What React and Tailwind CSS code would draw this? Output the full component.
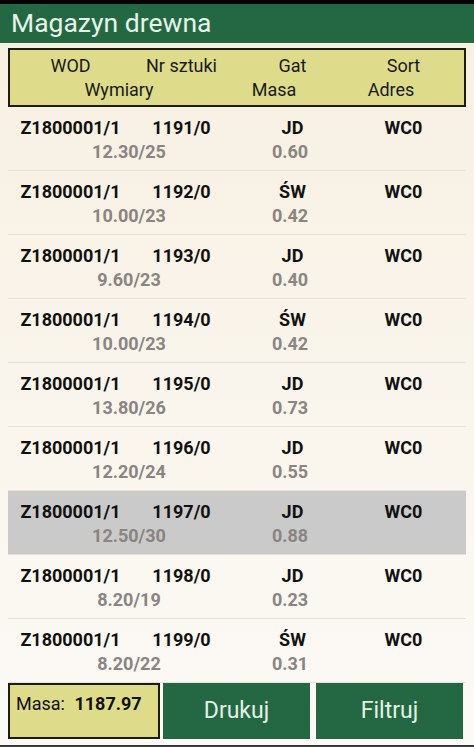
const rows = [
  { wod: "Z1800001/1", nr: "1191/0", gat: "JD", sort: "WC0", wym: "12.30/25", masa: "0.60" },
  { wod: "Z1800001/1", nr: "1192/0", gat: "ŚW", sort: "WC0", wym: "10.00/23", masa: "0.42" },
  { wod: "Z1800001/1", nr: "1193/0", gat: "JD", sort: "WC0", wym: "9.60/23", masa: "0.40" },
  { wod: "Z1800001/1", nr: "1194/0", gat: "ŚW", sort: "WC0", wym: "10.00/23", masa: "0.42" },
  { wod: "Z1800001/1", nr: "1195/0", gat: "JD", sort: "WC0", wym: "13.80/26", masa: "0.73" },
  { wod: "Z1800001/1", nr: "1196/0", gat: "JD", sort: "WC0", wym: "12.20/24", masa: "0.55" },
  { wod: "Z1800001/1", nr: "1197/0", gat: "JD", sort: "WC0", wym: "12.50/30", masa: "0.88", selected: true },
  { wod: "Z1800001/1", nr: "1198/0", gat: "JD", sort: "WC0", wym: "8.20/19", masa: "0.23" },
  { wod: "Z1800001/1", nr: "1199/0", gat: "ŚW", sort: "WC0", wym: "8.20/22", masa: "0.31" },
]

function Row({ r }) {
  return (
    <div
      className={`h-[64px] mx-[8px] pt-[9px] border-b border-[#e8e2d6] ${
        r.selected ? "bg-[#cacaca]" : ""
      }`}
    >
      <div className="flex pl-[7px] text-[18px] leading-[24px] font-bold text-[#111]">
        <div className="w-[111px] text-center">{r.wod}</div>
        <div className="w-[111px] text-center">{r.nr}</div>
        <div className="w-[111px] text-center">{r.gat}</div>
        <div className="w-[111px] text-center">{r.sort}</div>
      </div>
      <div className="flex pl-[7px] text-[18px] leading-[24px] font-bold text-[#8a8482]">
        <div className="w-[228px] text-center">{r.wym}</div>
        <div className="w-[94px] text-center">{r.masa}</div>
      </div>
    </div>
  )
}

export default function App() {
  return (
    <div
      className="w-[474px] h-[747px] overflow-hidden flex flex-col bg-gradient-to-b from-[#f7efe1] to-[#fcfaf6] text-[#111]"
      style={{ fontFamily: "Roboto, 'Noto Sans', sans-serif" }}
    >
      {/* status bar strip */}
      <div className="h-[4px] bg-black" />

      {/* title bar */}
      <div className="h-[39px] bg-[#246843] flex items-center pl-[11px]">
        <h1 className="text-[26.5px] leading-none text-[#e6f3e8]">Magazyn drewna</h1>
      </div>

      {/* column header */}
      <div className="mt-[5px] mx-[8px] h-[59px] border-2 border-[#1c1c14] bg-[#dedc8a] pt-[4px] text-[18px] leading-[24px] text-[#1a1a1a]">
        <div className="flex pl-[5px]">
          <div className="w-[111px] text-center">WOD</div>
          <div className="w-[111px] text-center">Nr sztuki</div>
          <div className="w-[111px] text-center">Gat</div>
          <div className="w-[111px] text-center">Sort</div>
        </div>
        <div className="flex pl-[5px]">
          <div className="w-[208px] text-center">Wymiary</div>
          <div className="w-[102px] text-center">Masa</div>
          <div className="w-[132px] text-center">Adres</div>
        </div>
      </div>

      {/* list */}
      <div className="flex-1 overflow-hidden">
        {rows.map((r) => (
          <Row key={r.nr} r={r} />
        ))}
      </div>

      {/* footer */}
      <div className="flex h-[56px] pl-[8px] mb-[6px]">
        <div className="w-[152px] border-2 border-[#1c1c14] bg-[#dedc8a] pl-[6px] pt-[7px] text-[18px] leading-[24px]">
          Masa: <span className="font-bold ml-[5px]">1187.97</span>
        </div>
        <button className="ml-[3px] w-[147px] bg-[#246843] text-[23px] text-[#e3f2e6]">Drukuj</button>
        <button className="ml-[6px] w-[147px] bg-[#246843] text-[23px] text-[#e3f2e6]">Filtruj</button>
      </div>
      <div className="h-[2px] bg-[#3a3a3a]" />
    </div>
  )
}
